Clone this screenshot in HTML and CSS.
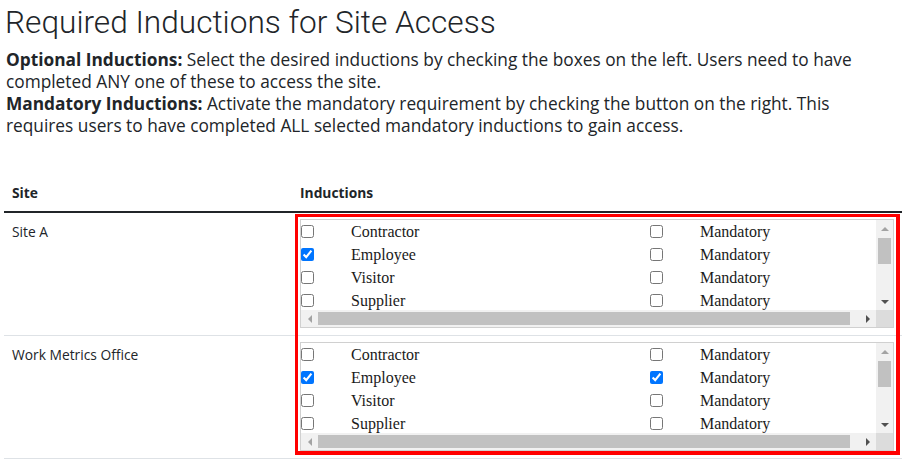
FILE: index.html
```html
<!DOCTYPE html>
<html lang="en">
<head>
<meta charset="utf-8">
<title>Required Inductions for Site Access</title>
<link rel="stylesheet" href="styles.css">
</head>
<body>
<div class="page">
  <h1 class="title">Required Inductions for Site Access</h1>
  <p class="intro">
    <strong>Optional Inductions:</strong> Select the desired inductions by checking the boxes on the left. Users need to have completed ANY one of these to access the site.<br>
    <strong>Mandatory Inductions:</strong> Activate the mandatory requirement by checking the button on the right. This requires users to have completed ALL selected mandatory inductions to gain access.
  </p>

  <div class="table-wrap">
    <table class="sites">
      <thead>
        <tr>
          <th class="col-site">Site</th>
          <th>Inductions</th>
        </tr>
      </thead>
      <tbody>
        <tr>
          <td class="col-site">Site A</td>
          <td class="col-ind">
            <div class="listbox">
              <div class="viewport">
                <div class="list">
                  <input type="checkbox"><span class="lbl">Contractor</span><input type="checkbox"><span class="lbl">Mandatory</span>
                  <input type="checkbox" checked><span class="lbl">Employee</span><input type="checkbox"><span class="lbl">Mandatory</span>
                  <input type="checkbox"><span class="lbl">Visitor</span><input type="checkbox"><span class="lbl">Mandatory</span>
                  <input type="checkbox"><span class="lbl">Supplier</span><input type="checkbox"><span class="lbl">Mandatory</span>
                  <input type="checkbox"><span class="lbl">Volunteer</span><input type="checkbox"><span class="lbl">Mandatory</span>
                  <input type="checkbox"><span class="lbl">Apprentice</span><input type="checkbox"><span class="lbl">Mandatory</span>
                  <input type="checkbox"><span class="lbl">Consultant</span><input type="checkbox"><span class="lbl">Mandatory</span>
                  <input type="checkbox"><span class="lbl">Delivery Driver</span><input type="checkbox"><span class="lbl">Mandatory</span>
                </div>
              </div>
              <div class="vbar">
                <span class="sbtn"><i class="arr up off"></i></span>
                <span class="vtrack"><span class="vthumb"></span></span>
                <span class="sbtn"><i class="arr down"></i></span>
              </div>
              <div class="hbar">
                <span class="sbtn"><i class="arr left off"></i></span>
                <span class="htrack"><span class="hthumb"></span></span>
                <span class="sbtn"><i class="arr right"></i></span>
              </div>
              <div class="corner"></div>
            </div>
          </td>
        </tr>
        <tr>
          <td class="col-site">Work Metrics Office</td>
          <td class="col-ind">
            <div class="listbox">
              <div class="viewport">
                <div class="list">
                  <input type="checkbox"><span class="lbl">Contractor</span><input type="checkbox"><span class="lbl">Mandatory</span>
                  <input type="checkbox" checked><span class="lbl">Employee</span><input type="checkbox" checked><span class="lbl">Mandatory</span>
                  <input type="checkbox"><span class="lbl">Visitor</span><input type="checkbox"><span class="lbl">Mandatory</span>
                  <input type="checkbox"><span class="lbl">Supplier</span><input type="checkbox"><span class="lbl">Mandatory</span>
                  <input type="checkbox"><span class="lbl">Volunteer</span><input type="checkbox"><span class="lbl">Mandatory</span>
                  <input type="checkbox"><span class="lbl">Apprentice</span><input type="checkbox"><span class="lbl">Mandatory</span>
                  <input type="checkbox"><span class="lbl">Consultant</span><input type="checkbox"><span class="lbl">Mandatory</span>
                  <input type="checkbox"><span class="lbl">Delivery Driver</span><input type="checkbox"><span class="lbl">Mandatory</span>
                </div>
              </div>
              <div class="vbar">
                <span class="sbtn"><i class="arr up off"></i></span>
                <span class="vtrack"><span class="vthumb"></span></span>
                <span class="sbtn"><i class="arr down"></i></span>
              </div>
              <div class="hbar">
                <span class="sbtn"><i class="arr left off"></i></span>
                <span class="htrack"><span class="hthumb"></span></span>
                <span class="sbtn"><i class="arr right"></i></span>
              </div>
              <div class="corner"></div>
            </div>
          </td>
        </tr>
      </tbody>
    </table>
    <div class="highlight"></div>
  </div>
</div>
</body>
</html>
```

FILE: styles.css
```css
html, body {
  margin: 0;
  padding: 0;
  background: #ffffff;
}

.page {
  padding: 5px 7px 0 4px;
  font-family: "Open Sans", "Noto Sans", sans-serif;
  color: #212529;
}

.title {
  margin: 0;
  font-family: Roboto, "Noto Sans", sans-serif;
  font-weight: 300;
  font-size: 31.6px;
  line-height: 36px;
  padding-left: 1px;
}

.intro {
  margin: 8px 0 0 2px;
  max-width: 862px;
  font-size: 17.3px;
  line-height: 22px;
}

.intro strong {
  font-weight: 700;
}

.table-wrap {
  position: relative;
  margin-top: 37px;
}

.sites {
  width: 100%;
  border-collapse: collapse;
  font-size: 13.8px;
  line-height: 21px;
}

.sites th,
.sites td {
  padding: 8px;
  text-align: left;
  vertical-align: top;
}

.sites th {
  font-weight: 700;
}

.sites thead tr {
  border-bottom: 2px solid #212529;
}

.sites tbody tr {
  border-bottom: 1px solid #dee2e6;
}

.col-site {
  width: 272px;
}

.sites td.col-ind {
  padding: 6px 8px 7px;
}

/* list box with its scrollbars */
.listbox {
  box-sizing: border-box;
  height: 109px;
  border: 1px solid #d0d0d0;
  display: grid;
  grid-template-columns: 1fr 17px;
  grid-template-rows: 1fr 17px;
}

.viewport {
  overflow: hidden;
}

.list {
  width: 588px;
  display: grid;
  grid-template-columns: 50px 299px 50px 1fr;
  grid-auto-rows: 23px;
  align-items: center;
  padding: 0 0 4px;
  font-family: "Liberation Serif", "Times New Roman", serif;
  font-size: 16px;
  color: #1a1a1a;
}

.list input {
  margin: 0;
  width: 13px;
  height: 13px;
}

.lbl {
  white-space: nowrap;
}

.vbar,
.hbar {
  display: flex;
  background: #f1f1f1;
}

.vbar {
  flex-direction: column;
}

.sbtn {
  flex: 0 0 17px;
  width: 17px;
  height: 17px;
  display: flex;
  align-items: center;
  justify-content: center;
}

.vtrack {
  flex: 1;
  padding: 1px 2px 0;
}

.vthumb {
  display: block;
  height: 26px;
  background: #c1c1c1;
}

.htrack {
  flex: 1;
  padding: 2px 9px 2px 0;
}

.hthumb {
  display: block;
  height: 13px;
  background: #c1c1c1;
}

.corner {
  background: #dcdcdc;
}

.arr {
  width: 0;
  height: 0;
  border: 4px solid transparent;
}

.arr.up {
  border-top-width: 0;
  border-bottom-color: #505050;
}

.arr.down {
  border-bottom-width: 0;
  border-top-color: #505050;
}

.arr.left {
  border-left-width: 0;
  border-right-color: #505050;
}

.arr.right {
  border-right-width: 0;
  border-left-color: #505050;
}

.arr.up.off {
  border-bottom-color: #a3a3a3;
}

.arr.left.off {
  border-right-color: #a3a3a3;
}

/* red annotation frame drawn over the inductions column */
.highlight {
  position: absolute;
  left: 291px;
  top: 40px;
  width: 598px;
  height: 234px;
  border-style: solid;
  border-color: #ff0000;
  border-width: 3px 4px 4px 3px;
  pointer-events: none;
}
```
